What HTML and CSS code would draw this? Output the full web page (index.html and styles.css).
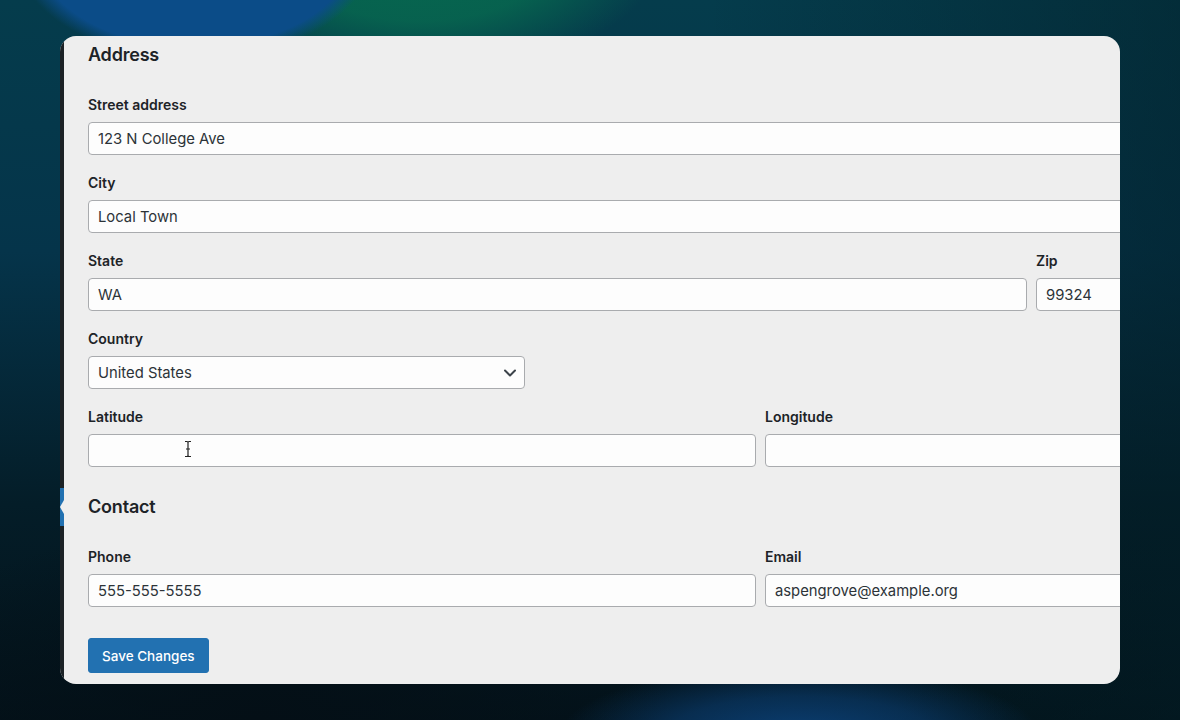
FILE: index.html
```html
<!DOCTYPE html>
<html lang="en">
<head>
<meta charset="utf-8">
<title>Address settings</title>
<link rel="stylesheet" href="styles.css">
</head>
<body>
<div class="desktop">
  <div class="window">
    <div class="sidebar">
      <div class="menu-current"><span class="menu-arrow"></span></div>
    </div>
    <div class="content">
      <form class="form">
        <h2 class="section-title">Address</h2>
        <div class="field">
          <label class="label">Street address</label>
          <input class="input" type="text" value="123 N College Ave">
        </div>
        <div class="field">
          <label class="label">City</label>
          <input class="input" type="text" value="Local Town">
        </div>
        <div class="row row-state">
          <div class="field">
            <label class="label">State</label>
            <input class="input" type="text" value="WA">
          </div>
          <div class="field">
            <label class="label">Zip</label>
            <input class="input" type="text" value="99324">
          </div>
        </div>
        <div class="field">
          <label class="label">Country</label>
          <div class="select-wrap">
            <select class="input select"><option>United States</option></select>
            <svg class="chevron" width="14" height="10" viewBox="0 0 14 10"><path d="M2 2.5 L7 7.5 L12 2.5" fill="none" stroke="#3c434a" stroke-width="2" stroke-linecap="round" stroke-linejoin="round"/></svg>
          </div>
        </div>
        <div class="row row-half">
          <div class="field">
            <label class="label">Latitude</label>
            <div class="input-wrap">
              <input class="input" type="text" value="">
              <svg class="ibeam" width="10" height="18" viewBox="0 0 10 18"><path d="M2 1.5 H4 Q5 1.5 5 3 V15 Q5 16.5 4 16.5 H2 M8 1.5 H6 Q5 1.5 5 3 M5 15 Q5 16.5 6 16.5 H8 M3 9 H7" fill="none" stroke="#222" stroke-width="1.2"/></svg>
            </div>
          </div>
          <div class="field">
            <label class="label">Longitude</label>
            <input class="input" type="text" value="">
          </div>
        </div>
        <h2 class="section-title contact">Contact</h2>
        <div class="row row-half">
          <div class="field">
            <label class="label">Phone</label>
            <input class="input" type="text" value="555-555-5555">
          </div>
          <div class="field">
            <label class="label">Email</label>
            <input class="input" type="text" value="aspengrove@example.org">
          </div>
        </div>
        <div class="actions">
          <button type="button" class="button-primary">Save Changes</button>
        </div>
      </form>
    </div>
  </div>
</div>
</body>
</html>
```

FILE: styles.css
```css
html, body {
  margin: 0;
  padding: 0;
}
body {
  width: 1180px;
  height: 720px;
  overflow: hidden;
  font-family: Inter, "Liberation Sans", Arial, sans-serif;
  background:
    radial-gradient(ellipse 180px 110px at 195px -50px, #0b4c88 0%, #0b4c88 88%, rgba(11,76,136,0) 100%),
    radial-gradient(ellipse 240px 120px at 420px -45px, #07684f 0%, rgba(7,104,79,0.85) 55%, rgba(7,104,79,0) 100%),
    radial-gradient(ellipse 240px 70px at 800px 735px, #0b3f74 0%, rgba(11,63,116,0.6) 55%, rgba(11,63,116,0) 100%),
    radial-gradient(ellipse 420px 200px at 260px 720px, #040f16 0%, rgba(4,15,22,0) 100%),
    linear-gradient(90deg, rgba(0,0,0,0) 60%, rgba(2,30,38,0.5) 100%),
    linear-gradient(180deg, #053c4c 0%, #05344a 35%, #041d28 70%, #03121a 100%);
}
.desktop {
  padding: 36px 60px;
  display: flex;
}
.window {
  width: 1060px;
  height: 648px;
  border-radius: 16px;
  overflow: hidden;
  display: flex;
  background: #eeeeee;
}
.sidebar {
  width: 4px;
  flex: none;
  background: #1c2226;
  display: flex;
  flex-direction: column;
}
.menu-current {
  margin-top: 452px;
  height: 38px;
  background: #2271b1;
  position: relative;
}
.menu-arrow {
  position: absolute;
  right: 0;
  top: 12px;
  width: 0;
  height: 0;
  border-right: 4px solid #eeeeee;
  border-top: 7px solid transparent;
  border-bottom: 7px solid transparent;
}
.content {
  flex: 1;
  overflow: hidden;
  padding: 7px 0 0 24px;
}
.form {
  width: 1345px;
  display: flex;
  flex-direction: column;
  gap: 18px;
  margin: 0;
}
.section-title {
  margin: 0 0 10px 0;
  font-size: 18px;
  line-height: 24px;
  font-weight: 600;
  color: #1d2327;
  letter-spacing: -0.2px;
}
.section-title.contact {
  margin-top: 10px;
}
.field {
  display: flex;
  flex-direction: column;
  gap: 7px;
  min-width: 0;
}
.label {
  font-size: 14px;
  line-height: 20px;
  font-weight: 600;
  color: #1d2327;
}
.input {
  box-sizing: border-box;
  height: 33px;
  width: 100%;
  margin: 0;
  padding: 0 9px;
  border: 1px solid #a9abae;
  border-radius: 4px;
  background: #fdfdfd;
  font-family: Inter, "Liberation Sans", Arial, sans-serif;
  font-size: 14.8px;
  color: #2c3338;
  outline: none;
}
.row {
  display: grid;
  gap: 9px;
}
.row-state {
  grid-template-columns: 939px 1fr;
}
.row-half {
  grid-template-columns: 1fr 1fr;
}
.select-wrap {
  width: 437px;
  position: relative;
}
.select {
  appearance: none;
  -webkit-appearance: none;
}
.chevron {
  position: absolute;
  right: 8px;
  top: 12px;
}
.input-wrap {
  position: relative;
}
.ibeam {
  position: absolute;
  left: 95px;
  top: 6px;
}
.actions {
  margin-top: 13px;
  display: flex;
}
.button-primary {
  height: 35px;
  padding: 0 13px;
  border: 1px solid #2271b1;
  border-radius: 3px;
  background: #2271b1;
  color: #ffffff;
  font-family: Inter, "Liberation Sans", Arial, sans-serif;
  font-size: 13.5px;
  font-weight: 500;
}
```
